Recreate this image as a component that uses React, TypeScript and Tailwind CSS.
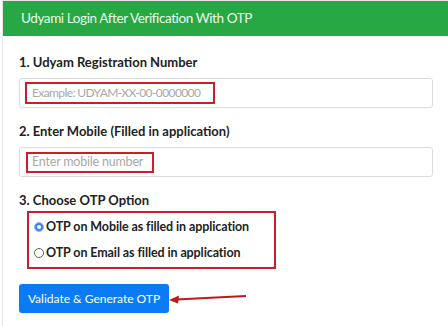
import React from 'react';

const App: React.FC = () => {
  return (
    <div className="w-[448px] h-[326px] bg-white overflow-hidden pl-[2px]" style={{ fontFamily: 'Lato, "Noto Sans", sans-serif' }}>
      <div className="border border-[#e5e5e5] border-r-0 h-[340px]">
        <div className="bg-[#28a745] h-[35px] flex items-center pl-[18px]">
          <h1 className="text-[#eafbe9] text-[13.5px] tracking-[-0.4px]">Udyami Login After Verification With OTP</h1>
        </div>

        <div className="pl-[16px] pr-[15px] pt-[16px]">
          <label className="block text-[13px] font-bold text-[#222] leading-[20px]">1. Udyam Registration Number</label>
          <div className="mt-[6px] h-[30px] border border-[#dcdcdc] rounded-[3px] flex items-center pl-[5px]">
            <div className="border-2 border-[#c8202a] h-[22px] w-[190px] flex items-center pl-[5px]">
              <span className="text-[12px] tracking-[-0.6px] text-[#a8a8a8] whitespace-nowrap">Example: UDYAM-XX-00-0000000</span>
            </div>
          </div>

          <label className="block mt-[13px] text-[13px] font-bold text-[#222] leading-[20px]">2. Enter Mobile (Filled in application)</label>
          <div className="mt-[6px] h-[30px] border border-[#dcdcdc] rounded-[3px] flex items-center pl-[6px]">
            <div className="border-2 border-[#c8202a] h-[21px] w-[128px] flex items-center pl-[4px]">
              <span className="text-[12.5px] tracking-[-0.2px] text-[#a8a8a8] whitespace-nowrap">Enter mobile number</span>
            </div>
          </div>

          <label className="block mt-[13px] text-[13px] font-bold text-[#222] leading-[20px]">3. Choose OTP Option</label>
          <div className="mt-[1px] ml-[8px] w-[249px] h-[58px] border-2 border-[#c8202a] flex flex-col justify-center gap-[7px] pl-[5px]">
            <label className="flex items-center gap-[2px] text-[12.5px] tracking-[-0.1px] font-bold text-[#222]">
              <span className="w-[10px] h-[10px] rounded-full bg-[#3b82f6] border border-[#9bb8e8] flex items-center justify-center">
                <span className="w-[4px] h-[4px] rounded-full bg-white" />
              </span>
              <span>OTP on Mobile as filled in application</span>
            </label>
            <label className="flex items-center gap-[2px] text-[12.5px] tracking-[-0.1px] font-bold text-[#222]">
              <span className="w-[10px] h-[10px] rounded-full border border-[#666] bg-white" />
              <span>OTP on Email as filled in application</span>
            </label>
          </div>

          <div className="mt-[15px] flex items-center">
            <button className="h-[29px] w-[150px] bg-[#0b7bf5] text-white text-[12px] rounded-[3px]">Validate &amp; Generate OTP</button>
            <svg width="80" height="12" viewBox="0 0 80 12" className="-ml-[1px]">
              <path d="M78 3 L8 6.5" stroke="#c0181f" strokeWidth="2" fill="none" />
              <path d="M1 7 L11 2.5 L10 10.5 Z" fill="#c0181f" />
            </svg>
          </div>
        </div>
      </div>
    </div>
  );
};

export default App;
